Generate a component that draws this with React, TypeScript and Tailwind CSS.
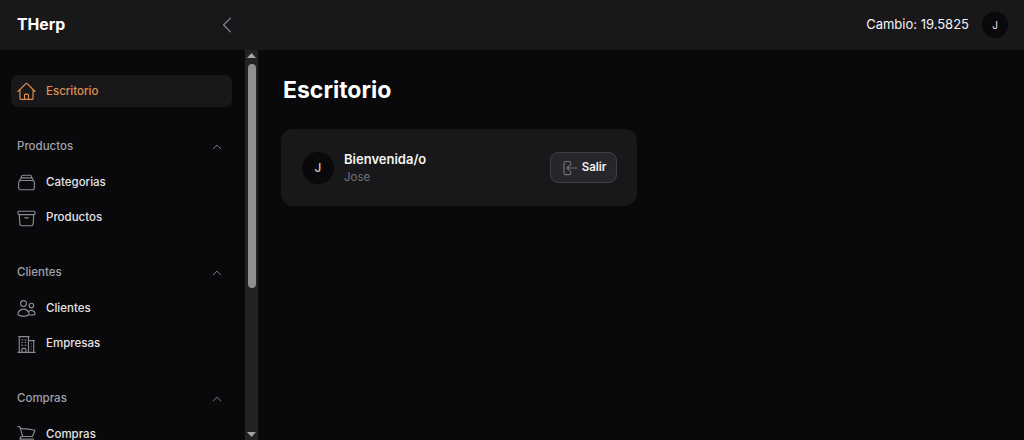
import React from "react";
import {
  HiOutlineHome,
  HiOutlineRectangleStack,
  HiOutlineArchiveBox,
  HiOutlineUsers,
  HiOutlineBuildingOffice2,
  HiOutlineShoppingCart,
  HiOutlineChevronUp,
  HiOutlineChevronLeft,
} from "react-icons/hi2";

type IconT = React.ComponentType<{ className?: string; strokeWidth?: number }>;

function Item({ icon: Icon, label }: { icon: IconT; label: string }) {
  return (
    <div className="mt-[3.5px] flex h-[32px] items-center gap-[9px] px-[5px]">
      <Icon className="h-[21px] w-[21px] text-[#8a8a90]" strokeWidth={1.3} />
      <span className="text-[11.5px] font-medium text-[#e4e4e7]">{label}</span>
    </div>
  );
}

function Group({ title, items }: { title: string; items: [IconT, string][] }) {
  return (
    <div className="mb-[29px]">
      <div className="mb-[9.5px] flex h-[20px] items-center justify-between pl-[6px] pr-[9px]">
        <span className="text-[11.5px] font-medium text-[#a1a1aa]">{title}</span>
        <HiOutlineChevronUp className="h-[12px] w-[12px] text-[#a1a1aa]" />
      </div>
      {items.map(([I, l]) => (
        <Item key={l} icon={I} label={l} />
      ))}
    </div>
  );
}

export default function App() {
  return (
    <div
      className="flex h-[440px] w-[1024px] flex-col overflow-hidden bg-[#09090b] text-white"
      style={{ fontFamily: "Inter, sans-serif" }}
    >
      <header className="flex h-[50px] shrink-0 items-center justify-between bg-[#18181b] pl-[17px] pr-[16px]">
        <div className="flex w-[221px] items-center justify-between">
          <span className="text-[15.8px] font-bold">THerp</span>
          <HiOutlineChevronLeft className="h-[22px] w-[22px] text-[#8a8a90]" strokeWidth={1.2} />
        </div>
        <div className="flex items-center gap-[13px]">
          <span className="pb-[1px] text-[13px] font-normal text-[#f4f4f5]">Cambio: 19.5825</span>
          <div className="flex h-[26px] w-[26px] items-center justify-center rounded-full bg-[#09090b] text-[10px] text-[#e4e4e7]">
            J
          </div>
        </div>
      </header>
      <div className="flex min-h-0 flex-1">
        <aside className="w-[245px] shrink-0 overflow-hidden pl-[11px] pr-[13px] pt-[25px]">
          <div className="mb-[30px] flex h-[32px] items-center gap-[9px] rounded-[7px] bg-[#18181b] px-[5px]">
            <HiOutlineHome className="h-[21px] w-[21px] text-[#e0914f]" strokeWidth={1.3} />
            <span className="pt-[1px] text-[11.5px] font-medium text-[#e0914f]">Escritorio</span>
          </div>
          <Group
            title="Productos"
            items={[
              [HiOutlineRectangleStack, "Categorias"],
              [HiOutlineArchiveBox, "Productos"],
            ]}
          />
          <Group
            title="Clientes"
            items={[
              [HiOutlineUsers, "Clientes"],
              [HiOutlineBuildingOffice2, "Empresas"],
            ]}
          />
          <Group title="Compras" items={[[HiOutlineShoppingCart, "Compras"]]} />
        </aside>
        <div className="flex w-[13px] shrink-0 flex-col items-center justify-between bg-[#222224] pb-[3px] pt-[3px]">
          <div className="flex w-full flex-col items-center">
            <svg width="9" height="5" viewBox="0 0 9 5"><path d="M4.5 0L9 5H0z" fill="#a3a3a3" /></svg>
            <div className="mt-[6px] h-[224px] w-[8px] rounded-full bg-[#8f8f8f]" />
          </div>
          <svg width="9" height="5" viewBox="0 0 9 5"><path d="M0 0H9L4.5 5z" fill="#a3a3a3" /></svg>
        </div>
        <main className="flex-1 pl-[23px] pt-[24px]">
          <h1 className="ml-[2px] text-[23px] font-bold leading-[32px]">Escritorio</h1>
          <div className="mt-[23px] flex h-[77px] w-[356px] items-center justify-between rounded-[12px] bg-[#18181b] pl-[21px] pr-[20px]">
            <div className="flex items-center gap-[10px]">
              <div className="flex h-[32px] w-[32px] items-center justify-center rounded-full bg-[#09090b] text-[12px] text-[#e4e4e7]">
                J
              </div>
              <div className="flex flex-col">
                <span className="text-[13px] font-semibold leading-[18px] text-[#f4f4f5]">Bienvenida/o</span>
                <span className="text-[11.5px] leading-[18px] text-[#71717a]">Jose</span>
              </div>
            </div>
            <button className="flex h-[31px] w-[67px] items-center justify-center gap-[3px] rounded-[8px] border border-[#3f3f46] bg-[#27272a]">
              <svg className="h-[18px] w-[18px] text-[#71717a]" viewBox="0 0 24 24" fill="none" stroke="currentColor" strokeWidth="1.5" strokeLinecap="round" strokeLinejoin="round">
                <path d="M13 8V5.5a2.25 2.25 0 0 0-2.25-2.25h-4.5A2.25 2.25 0 0 0 4 5.5v13a2.25 2.25 0 0 0 2.25 2.25h4.5A2.25 2.25 0 0 0 13 18.5V16" />
                <path d="M11 9l-3 3 3 3M8 12h13" />
              </svg>
              <span className="text-[11.5px] font-semibold text-[#f4f4f5]">Salir</span>
            </button>
          </div>
        </main>
      </div>
    </div>
  );
}
